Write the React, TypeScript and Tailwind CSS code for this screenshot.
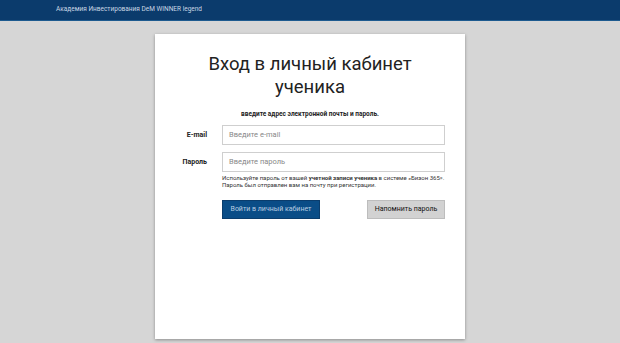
export default function App() {
  return (
    <div className="min-h-[343px] bg-[#d6d6d6] font-['Roboto','Liberation_Sans',sans-serif]">
      <header className="h-[21px] bg-[#0b3b6c] border-b border-[#1d5a8f] flex items-center pl-[56px]">
        <span className="text-[6.5px] text-[#c9d6e4]">Академия Инвестирования DeM WINNER legend</span>
      </header>

      <div className="flex justify-center pt-[13px]">
        <div className="w-[310px] h-[305px] bg-white shadow-[0_1px_3px_rgba(0,0,0,0.35)] flex flex-col items-center">
          <h1 className="mt-[19px] text-[18.5px] leading-[23px] text-[#222] text-center">
            Вход в личный кабинет
            <br />
            ученика
          </h1>
          <p className="mt-[11px] text-[6.5px] font-bold text-[#222]">введите адрес электронной почты и пароль.</p>

          <div className="mt-[5px] w-full pl-[22px] pr-[20px] flex flex-col gap-[7px]">
            <div className="flex items-center">
              <label className="w-[45px] pr-[15px] text-right text-[7px] font-bold text-[#222]">E-mail</label>
              <div className="flex-1 h-[20px] border border-[#cfcfcf] flex items-center px-[6px] text-[7.5px] text-[#888]">Введите e-mail</div>
            </div>
            <div className="flex items-center">
              <label className="w-[45px] pr-[15px] text-right text-[7px] font-bold text-[#222]">Пароль</label>
              <div className="flex-1 h-[20px] border border-[#cfcfcf] flex items-center px-[6px] text-[7.5px] text-[#888]">Введите пароль</div>
            </div>
          </div>

          <p className="mt-[2px] self-start ml-[67px] text-[6px] leading-[7.5px] text-[#333]">
            Используйте пароль от вашей <b>учетной записи ученика</b> в системе «Бизон 365».
            <br />
            Пароль был отправлен вам на почту при регистрации.
          </p>

          <div className="mt-[11px] w-full pl-[67px] pr-[20px] flex justify-between">
            <button className="w-[98px] h-[19px] bg-[#0a4d87] border border-[#0a3d6d] text-[7px] text-[#b9cde2]">Войти в личный кабинет</button>
            <button className="w-[78px] h-[19px] bg-[#d2d2d2] border border-[#bdbdbd] text-[7px] text-[#111]">Напомнить пароль</button>
          </div>
        </div>
      </div>
    </div>
  );
}
